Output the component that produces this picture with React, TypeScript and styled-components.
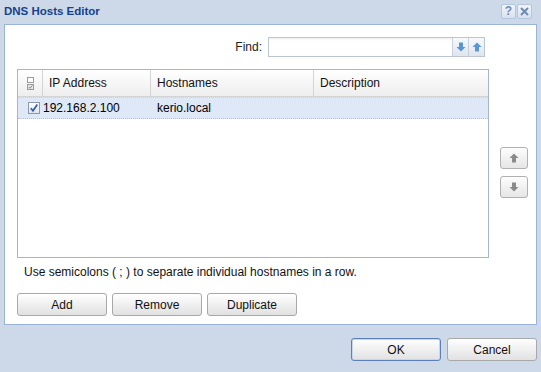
import React from "react";
import styled, { createGlobalStyle } from "styled-components";

const Global = createGlobalStyle`
  html, body { margin: 0; padding: 0; }
  body { font-family: "Liberation Sans", Arial, sans-serif; font-size: 12px; color: #000; }
`;

const Window = styled.div`
  width: 541px;
  height: 372px;
  background: #cdd9e9;
  display: flex;
  flex-direction: column;
  box-sizing: border-box;
`;

const TitleBar = styled.div`
  height: 24px;
  display: flex;
  align-items: center;
  justify-content: space-between;
  padding: 0 9px 0 4px;
  box-sizing: border-box;
`;

const Title = styled.div`
  font-weight: bold;
  font-size: 11.5px;
  color: #15428b;
  margin-top: -2px;
`;

const ToolButtons = styled.div`
  display: flex;
  gap: 1px;
  margin-top: -2px;
`;

const ToolButton = styled.div`
  width: 15px;
  height: 15px;
  box-sizing: border-box;
  border: 1px solid #b3c6de;
  border-radius: 2px;
  background: linear-gradient(#f1f5fa, #d7e2ef);
  display: flex;
  align-items: center;
  justify-content: center;
  color: #6f8bb0;
  font-weight: bold;
  font-size: 12px;
  line-height: 1;
`;

const Body = styled.div`
  margin: 0 4px;
  width: 533px;
  height: 301px;
  box-sizing: border-box;
  background: #fff;
  border: 1px solid #99b4d6;
  padding: 12px 0 0 12px;
  display: flex;
  flex-direction: column;
`;

const FindRow = styled.div`
  width: 468px;
  height: 20px;
  display: flex;
  justify-content: flex-end;
  align-items: center;
`;

const FindLabel = styled.label`
  margin-right: 6px;
  color: #222;
`;

const FindBox = styled.div`
  display: flex;
  height: 20px;
  box-sizing: border-box;
  border: 1px solid #bcc6d3;
`;

const FindInput = styled.div`
  width: 183px;
  background: linear-gradient(#f0f0f0 0, #fff 3px);
`;

const FindButton = styled.div`
  width: 16px;
  box-sizing: border-box;
  border-left: 1px solid #c8d2de;
  background: linear-gradient(#f7f9fb, #dfe5ec);
  display: flex;
  align-items: center;
  justify-content: center;
`;

const Main = styled.div`
  display: flex;
  margin-top: 12px;
`;

const Grid = styled.div`
  width: 472px;
  height: 189px;
  box-sizing: border-box;
  border: 1px solid #a6b6cb;
  display: flex;
  flex-direction: column;
`;

const HeaderRow = styled.div`
  height: 27px;
  display: flex;
  box-sizing: border-box;
  background: linear-gradient(#ffffff, #eeeeee);
  border-bottom: 1px solid #d4d4d4;
`;

const HeaderCell = styled.div<{ $w?: number }>`
  ${(p) => (p.$w ? `width: ${p.$w}px; flex: none;` : "flex: 1;")}
  box-sizing: border-box;
  border-right: ${(p) => (p.$w ? "1px solid #d4d4d4" : "none")};
  display: flex;
  align-items: center;
  padding-left: 6px;
  color: #111;
`;

const CheckHeaderCell = styled(HeaderCell)`
  padding-left: 0;
  justify-content: center;
`;

const DataRow = styled.div<{ $selected?: boolean }>`
  height: 22px;
  display: flex;
  align-items: center;
  box-sizing: border-box;
  background: ${(p) => (p.$selected ? "#dfe8f6" : "#fff")};
  border-top: 1px dotted ${(p) => (p.$selected ? "#c6d2e2" : "transparent")};
  border-bottom: 1px dotted #b9c3d0;
`;

const Cell = styled.div<{ $w?: number; $pl?: number }>`
  ${(p) => (p.$w ? `width: ${p.$w}px; flex: none;` : "flex: 1;")}
  box-sizing: border-box;
  padding-left: ${(p) => p.$pl ?? 6}px;
  white-space: nowrap;
  overflow: hidden;
`;

const CheckCell = styled.div`
  width: 24px;
  flex: none;
  display: flex;
  justify-content: flex-end;
  padding-right: 2px;
  box-sizing: border-box;
`;

const SideButtons = styled.div`
  display: flex;
  flex-direction: column;
  gap: 7px;
  margin-left: 11px;
  padding-top: 78px;
`;

const SideButton = styled.div`
  width: 28px;
  height: 22px;
  box-sizing: border-box;
  border: 1px solid #b0b0b0;
  border-radius: 3px;
  background: linear-gradient(#fdfdfd, #e6e6e6);
  display: flex;
  align-items: center;
  justify-content: center;
`;

const Hint = styled.div`
  margin-top: 7px;
  padding-left: 7px;
  height: 14px;
  line-height: 14px;
  color: #111;
`;

const ButtonRow = styled.div`
  display: flex;
  gap: 5px;
  margin-top: 14px;
`;

const Button = styled.div<{ $focus?: boolean }>`
  width: 90px;
  height: 23px;
  box-sizing: border-box;
  border: 1px solid ${(p) => (p.$focus ? "#5c7fb8" : "#a8a8a8")};
  border-radius: 3px;
  background: linear-gradient(#ffffff, #f1f1f1 45%, #e1e1e1);
  display: flex;
  align-items: center;
  justify-content: center;
  color: #111;
  box-shadow: ${(p) => (p.$focus ? "inset 0 0 0 1px #c8d6ec" : "none")};
`;

const Footer = styled.div`
  display: flex;
  justify-content: flex-end;
  gap: 6px;
  padding: 13px 4px 0 0;
`;

const Arrow = ({ dir, color }: { dir: "up" | "down"; color: string }) => (
  <svg width="10" height="10" viewBox="0 0 10 10">
    <path
      d={
        dir === "up"
          ? "M5 0.5 L9.5 5 L7 5 L7 9.5 L3 9.5 L3 5 L0.5 5 Z"
          : "M5 9.5 L9.5 5 L7 5 L7 0.5 L3 0.5 L3 5 L0.5 5 Z"
      }
      fill={color}
    />
  </svg>
);

const RowCheck = () => (
  <svg width="12" height="12" viewBox="0 0 12 12">
    <defs>
      <linearGradient id="cb" x1="0" y1="0" x2="0" y2="1">
        <stop offset="0" stopColor="#ffffff" />
        <stop offset="1" stopColor="#dfe3ea" />
      </linearGradient>
    </defs>
    <rect x="0.5" y="0.5" width="11" height="11" fill="url(#cb)" stroke="#8e9aab" />
    <path d="M2.8 6.2 L5 8.8 L9.3 2.6" fill="none" stroke="#2f5fae" strokeWidth="1.7" />
  </svg>
);

const HeaderCheck = () => (
  <svg width="7" height="13" viewBox="0 0 7 13">
    <rect x="0.5" y="0.5" width="6" height="5" fill="#fff" stroke="#9a9a9a" />
    <rect x="0.5" y="7.5" width="6" height="5" fill="#e8e8e8" stroke="#9a9a9a" />
    <path d="M1.8 10 L3 11.3 L5.3 8.5" fill="none" stroke="#7a8aa0" strokeWidth="1" />
  </svg>
);

export default function App() {
  return (
    <>
      <Global />
      <Window>
        <TitleBar>
          <Title>DNS Hosts Editor</Title>
          <ToolButtons>
            <ToolButton>?</ToolButton>
            <ToolButton>
              <svg width="9" height="9" viewBox="0 0 9 9">
                <path d="M1 1 L8 8 M8 1 L1 8" stroke="#6f8bb0" strokeWidth="2" />
              </svg>
            </ToolButton>
          </ToolButtons>
        </TitleBar>
        <Body>
          <FindRow>
            <FindLabel>Find:</FindLabel>
            <FindBox>
              <FindInput />
              <FindButton>
                <Arrow dir="down" color="#5a95d6" />
              </FindButton>
              <FindButton>
                <Arrow dir="up" color="#5a95d6" />
              </FindButton>
            </FindBox>
          </FindRow>
          <Main>
            <Grid>
              <HeaderRow>
                <CheckHeaderCell $w={25}>
                  <HeaderCheck />
                </CheckHeaderCell>
                <HeaderCell $w={108}>IP Address</HeaderCell>
                <HeaderCell $w={163}>Hostnames</HeaderCell>
                <HeaderCell>Description</HeaderCell>
              </HeaderRow>
              <DataRow $selected>
                <CheckCell>
                  <RowCheck />
                </CheckCell>
                <Cell $w={109} $pl={1}>192.168.2.100</Cell>
                <Cell $w={163}>kerio.local</Cell>
                <Cell></Cell>
              </DataRow>
            </Grid>
            <SideButtons>
              <SideButton>
                <Arrow dir="up" color="#8a8a8a" />
              </SideButton>
              <SideButton>
                <Arrow dir="down" color="#8a8a8a" />
              </SideButton>
            </SideButtons>
          </Main>
          <Hint>Use semicolons ( ; ) to separate individual hostnames in a row.</Hint>
          <ButtonRow>
            <Button>Add</Button>
            <Button>Remove</Button>
            <Button>Duplicate</Button>
          </ButtonRow>
        </Body>
        <Footer>
          <Button $focus>OK</Button>
          <Button>Cancel</Button>
        </Footer>
      </Window>
    </>
  );
}
